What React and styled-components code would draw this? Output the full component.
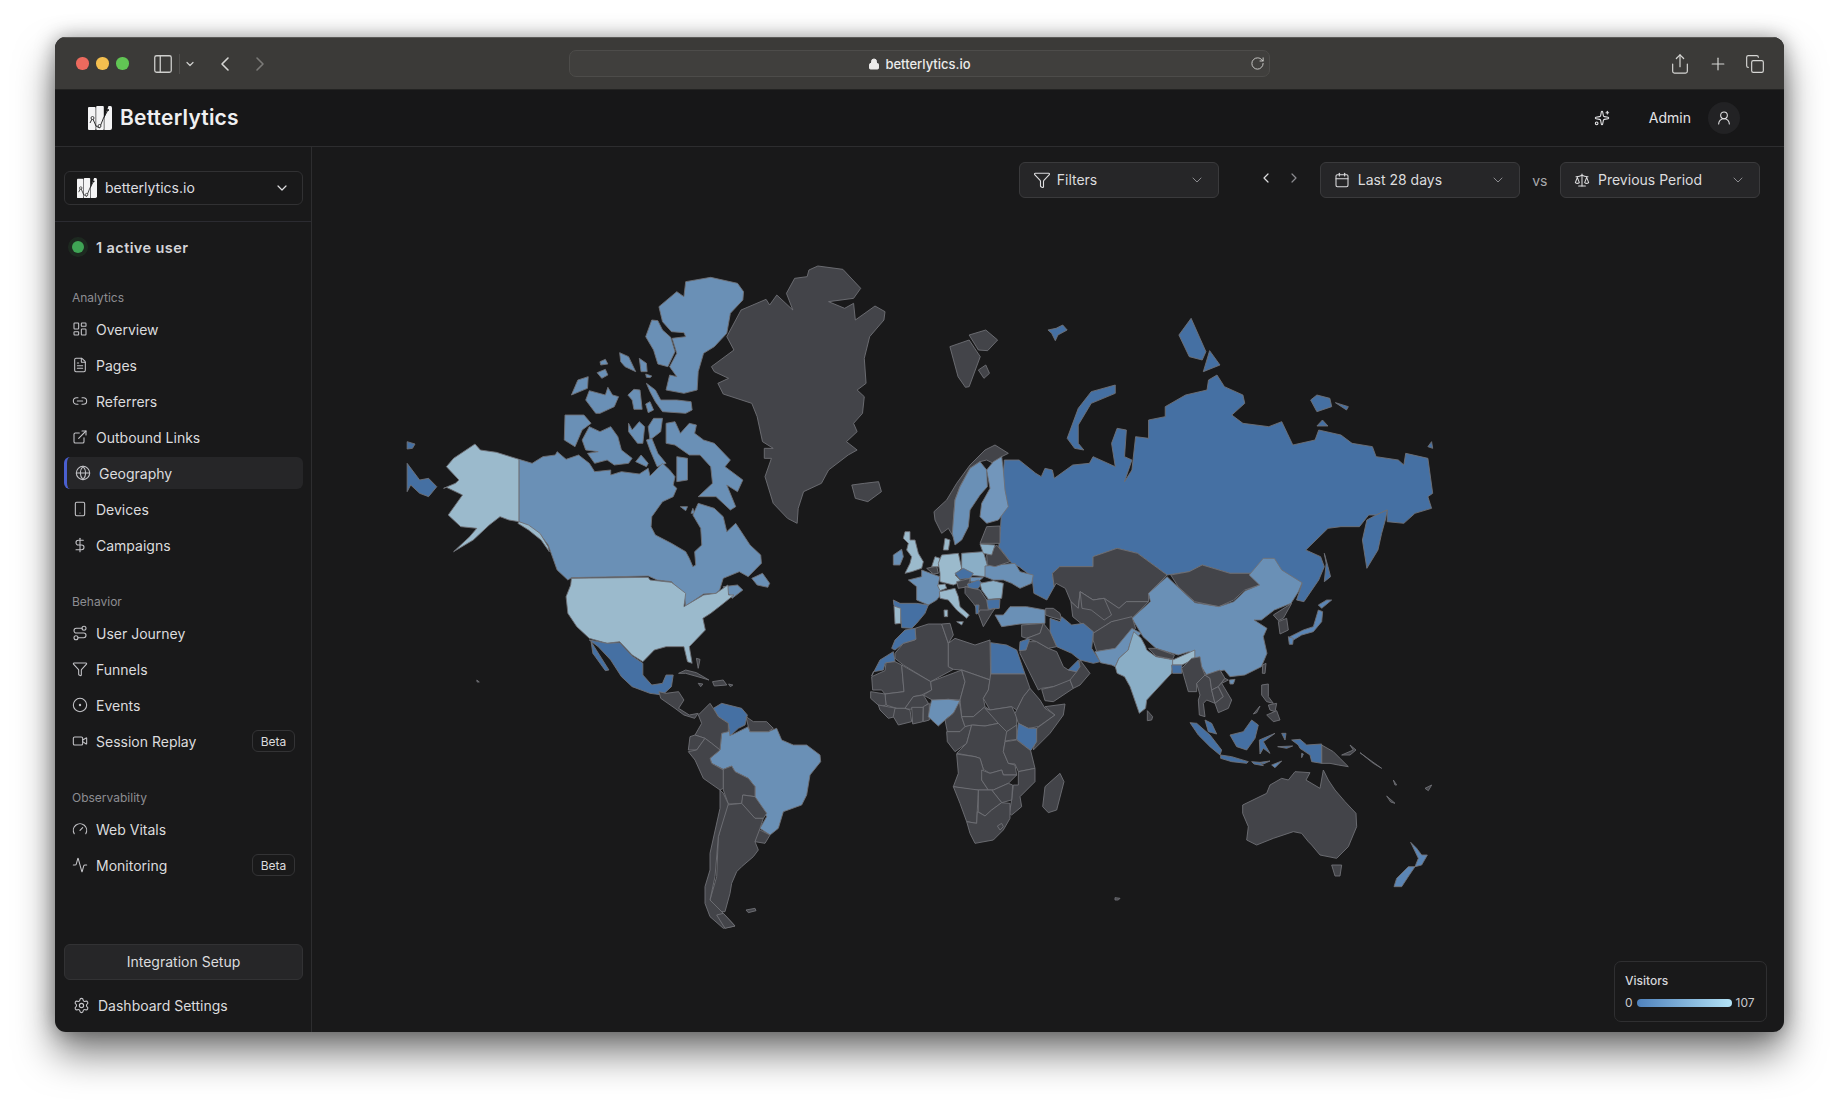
import React from "react";
import styled, { createGlobalStyle } from "styled-components";
import {
  Activity, Calendar, ChevronDown, ChevronLeft, ChevronRight, CircleDot, Copy, DollarSign,
  ExternalLink, FileText, Filter, Gauge, Globe, LayoutDashboard, Link2, Lock, PanelLeft, Plus,
  RotateCw, Route, Scale, Settings, Share, Smartphone, Sparkles, UserRound, Video,
} from "lucide-react";

const D = "#4570a3";
const M = "#6a90b6";
const N = "#5b86b6";
const L = "#9bbacc";
const I = "#8aaec6";
const G = "#434449";

// each region is traced in its own coordinates, x/y is where it starts on the map
const regions = [
  {
    x: 860, y: 300, sx: 2.703, sy: 3,
    shapes: [
      [D, "390,480 430,480 475,520 490,530 500,505 520,510 525,535 575,495 620,490 630,470 680,495 690,500 680,430 695,385 720,390 715,470 735,480 715,545 735,510 745,410 780,415 780,360 825,350 825,320 880,285 938,270 942,240 965,225 985,260 1035,285 1040,310 1005,345 1035,370 1105,380 1140,365 1155,400 1170,435 1230,420 1240,390 1300,405 1330,430 1385,440 1395,470 1455,480 1470,495 1475,460 1535,475 1548,580 1535,590 1545,625 1500,640 1470,670 1425,665 1425,630 1395,645 1375,645 1350,680 1300,680 1265,685 1205,750 1245,770 1255,800 1240,840 1200,905 1180,900 1195,850 1120,805 1100,775 1060,820 1000,820 925,795 890,815 830,825 750,760 695,745 630,770 630,800 540,800 520,820 525,860 505,900 470,880 465,830 430,800 410,790 375,740 380,680"],
      [D, "1358,720 1370,660 1395,645 1425,630 1420,660 1410,700 1400,750 1370,805"],
      [D, "1255,760 1265,800 1272,830 1255,845 1260,790"],
      [D, "560,415 590,325 625,275 690,255 690,280 625,310 590,375 590,430 605,450 580,445"],
      [D, "862,105 895,55 935,155 925,180 890,170"],
      [D, "928,215 945,152 973,195"],
      [D, "1218,300 1235,285 1270,295 1275,320 1235,335"],
      [D, "1285,308 1320,320 1315,330"],
      [D, "1235,378 1250,360 1265,378"],
      [D, "508,90 530,85 548,75 560,90 535,105 528,122 518,100"],
      [D, "1535,440 1545,425 1548,445"],
      [G, "243,140 295,120 325,170 295,260 285,262 265,230"],
      [G, "295,105 340,90 372,120 345,152 320,150"],
      [G, "320,210 340,195 350,220 335,235"],
      [G, "630,770 695,745 750,760 830,825 780,880 780,905 720,905 700,925 660,895 630,900 595,875 590,925 570,905 555,865 530,850 525,860 520,820 540,800 630,800"],
      [G, "840,825 890,815 925,795 1000,820 1060,820 1080,855 1040,870 1010,900 970,920 905,905 860,860"],
      [M, "830,830 860,862 905,908 970,920 1010,905 1042,872 1080,855 1052,825 1090,775 1120,775 1140,810 1195,848 1185,875 1165,910 1120,930 1085,960 1065,960 1100,985 1090,1010 1100,1060 1085,1100 1040,1125 1000,1130 985,1110 960,1115 940,1130 920,1095 890,1055 860,1065 800,1045 765,1010 735,955 785,905 780,880"],
      [G, "575,950 570,905 590,925 595,875 630,900 660,895 700,925 720,905 780,905 735,955 680,965 630,1000"],
      [G, "595,875 630,900 660,895 680,945 660,960 625,930 600,925"],
      [G, "630,1000 680,965 735,950 745,985 695,1045 640,1055 630,1020"],
      [M, "635,1055 690,1045 735,985 760,1000 730,1030 725,1050 700,1075 690,1100 680,1095 650,1088"],
      [I, "740,995 760,1015 772,1040 775,1050 800,1070 850,1080 845,1095 842,1120 800,1170 775,1200 772,1225 755,1240 730,1160 715,1130 695,1120 690,1100 700,1075 725,1050 730,1030"],
      [G, "780,1045 800,1045 850,1065 845,1078 800,1068"],
      [L, "845,1080 905,1050 905,1075 880,1090 870,1095 845,1095"],
      [D, "842,1095 870,1095 870,1120 845,1120"],
    ],
  },
  {
    x: 860, y: 610, sx: 3, sy: 3,
    shapes: [
      [G, "105,130 130,100 165,90 165,55 205,42 245,42 265,100 265,170 280,178 212,215 130,165 105,145"],
      [G, "245,42 270,40 280,75 265,100"],
      [G, "265,100 285,85 345,105 390,90 392,210 305,180 280,178 265,170"],
      [D, "392,98 440,105 470,120 495,192 393,192"],
      [D, "135,60 165,55 168,88 130,100 105,120 95,115 105,90"],
      [D, "35,198 60,150 100,125 105,155 75,160 70,180 40,185"],
      [G, "35,200 75,182 78,158 105,155 125,165 132,245 75,252 65,240 38,240"],
      [G, "125,165 212,215 215,240 185,255 160,260 135,295 110,295 78,285 75,252 132,245"],
      [G, "212,215 305,180 315,215 300,270 265,268 220,272 190,255 215,240"],
      [G, "305,180 390,210 385,240 370,265 375,290 340,320 305,320 300,270 315,215"],
      [G, "392,192 495,192 510,235 490,260 470,300 455,290 390,300 370,265 385,240"],
      [G, "32,245 75,252 78,285 60,290 32,265"],
      [G, "55,285 110,295 105,320 85,325 60,300"],
      [G, "105,295 135,295 150,300 155,335 115,345 100,320"],
      [G, "135,295 160,260 190,255 205,280 190,292 150,298"],
      [G, "155,292 190,292 188,335 158,342"],
      [G, "190,290 208,280 208,330 190,335"],
      [M, "215,270 265,268 300,272 295,290 280,310 255,330 235,348 215,330 205,320 210,290"],
      [G, "255,330 280,310 298,275 305,320 315,350 300,365 262,365"],
      [G, "305,320 340,320 375,290 390,300 415,340 375,348 340,345 315,350"],
      [G, "260,365 300,365 315,350 335,345 320,400 285,425 262,395"],
      [G, "335,345 375,348 415,340 450,350 435,395 430,425 445,460 465,465 470,495 430,495 425,480 390,490 370,478 360,445 345,440 290,430 320,400"],
      [G, "375,295 390,300 455,290 470,320 470,350 440,365 415,340"],
      [G, "490,260 510,235 540,270 555,295 585,315 535,350 505,355 475,340 465,310"],
      [G, "555,290 615,282 610,315 570,370 520,420 530,355 585,315"],
      [D, "475,340 505,355 530,355 530,395 512,422 470,388"],
      [G, "440,365 470,345 470,388 435,393"],
      [G, "435,395 470,390 512,422 525,475 475,485 465,462 445,460 430,425"],
      [G, "290,432 345,440 360,445 370,478 365,510 385,540 340,540 280,530 295,490"],
      [G, "365,480 390,490 425,480 430,495 470,495 445,520 400,540 385,540 365,510"],
      [G, "475,485 525,475 525,515 480,560 485,590 455,615 448,610 455,570 460,525 475,525"],
      [G, "400,540 445,520 458,525 455,570 425,578 395,540"],
      [G, "355,540 395,540 425,578 395,600 375,618 355,605"],
      [G, "280,530 355,540 350,640 320,635 300,580"],
      [G, "320,635 350,640 352,605 375,618 395,600 425,578 450,580 450,625 430,660 400,690 345,700 330,670"],
      [G, "412,648 425,640 430,650 420,660"],
      [G, "555,530 600,490 612,515 590,600 565,608 548,590"],
      [G, "495,95 530,95 565,115 590,125 610,170 625,180 650,185 645,215 580,230 545,235 535,240 480,130 480,125"],
      [G, "545,238 580,230 630,210 640,235 580,275 555,272"],
      [G, "640,235 630,210 650,185 660,150 690,190 660,225"],
      [D, "625,180 655,150 660,170 650,185"],
      [D, "480,95 510,85 498,120 478,122"],
    ],
  },
  {
    x: 880, y: 440, sx: 3, sy: 3,
    shapes: [
      [G, "162,215 200,180 230,130 270,75 315,30 345,15 385,40 365,50 340,70 320,60 300,65 270,85 240,140 225,180 220,240 220,290 205,265 185,280 165,240"],
      [M, "300,65 320,90 322,140 300,165 270,210 265,260 245,300 225,315 217,280 225,180 240,140 270,85"],
      ["#7296bb", "340,65 365,50 370,90 375,150 385,200 355,240 320,250 300,230 305,190 330,145 320,90"],
      [L, "195,295 210,300 205,330 190,330"],
      [L, "75,275 90,275 90,300 105,300 115,340 130,365 125,385 95,395 75,400 90,370 95,350 80,330 85,310 70,295"],
      [M, "40,345 65,328 70,350 60,375 40,375"],
      [M, "85,420 125,410 125,390 165,405 180,410 175,430 185,460 170,480 145,495 110,480 110,440"],
      [G, "140,385 170,378 175,400 160,402"],
      [L, "155,380 165,350 180,355 175,380"],
      [L, "175,370 185,345 235,340 245,385 225,405 245,425 220,435 180,425 180,400"],
      [I, "245,340 310,335 322,375 315,410 270,405 245,385"],
      [D, "225,400 250,385 280,400 270,415 240,418"],
      [L, "172,435 195,432 200,445 180,452"],
      [G, "230,425 270,415 265,440 235,445"],
      [M, "270,412 310,412 295,425 272,425"],
      [D, "262,432 295,420 305,428 295,445 268,450"],
      [L, "178,455 225,445 235,470 240,500 268,525 260,535 230,510 205,480 180,475"],
      [L, "192,510 203,510 203,530 193,530"],
      [L, "230,545 250,545 245,555"],
      [M, "315,378 405,370 420,395 460,405 455,430 420,445 395,430 370,420 340,420 315,410"],
      [G, "350,315 390,365 345,380 322,375 320,345"],
      [I, "300,312 345,315 335,345 310,340"],
      [G, "320,260 360,258 360,310 300,310"],
      [I, "300,430 340,422 370,430 365,475 325,478 305,450"],
      [D, "315,480 360,478 358,505 325,508"],
      [G, "255,440 300,450 320,480 325,510 310,530 300,520 280,490 255,460"],
      [D, "287,495 297,495 295,520 288,522"],
      [G, "300,510 325,510 345,505 335,520 310,560 295,520"],
      [D, "40,480 60,490 110,490 145,495 135,520 110,550 95,565 65,563 60,510 42,497"],
      [L, "42,498 62,505 62,550 45,552"],
      [M, "345,525 370,525 390,500 440,500 495,510 495,550 420,552 365,560"],
      [G, "497,505 520,505 540,520 545,540 510,530 497,525"],
      [D, "510,535 540,545 545,530 575,555 610,550 640,575 635,625 660,665 640,670 600,660 575,640 530,620 510,575"],
      [G, "425,555 490,550 480,580 440,595 425,590"],
      [G, "490,550 510,575 530,620 505,625 470,605 440,595 480,580"],
    ],
  },
  {
    x: 660, y: 680, sx: 3, sy: 3,
    shapes: [
      [M, "185,160 205,150 215,165 265,140 270,155 325,155 350,145 365,180 400,195 440,195 480,225 482,245 450,285 440,345 425,375 370,395 355,445 330,465 300,445 320,410 285,350 285,320 265,295 225,275 215,258 190,268 155,250 150,235 180,210"],
      [D, "160,85 185,70 245,85 262,105 255,135 235,145 210,168 205,130 175,110"],
      [G, "115,105 150,70 160,85 175,110 205,130 205,155 185,160 180,210 155,190 135,175 105,165 125,130"],
      [G, "258,110 280,125 320,125 340,145 325,155 270,155 265,140"],
      [G, "90,170 105,165 135,175 110,210 85,210"],
      [G, "85,215 110,210 135,175 155,190 180,210 150,235 155,250 190,270 190,325 180,330 130,295 105,240"],
      [G, "190,268 215,258 225,275 265,295 285,320 285,350 250,345 245,370 205,372 190,330"],
      [G, "248,345 285,350 320,400 310,415 285,415 245,372"],
      [G, "290,445 330,465 315,490 285,485"],
      [G, "200,375 245,370 285,415 310,415 300,445 285,485 295,510 280,530 245,560 230,575 215,610 210,640 195,695 160,695 150,660 170,590 175,470"],
      [G, "180,330 190,340 205,372 175,470 165,590 150,660 190,700 225,738 190,745 150,710 135,670 135,620 150,570 150,520 180,385"],
      [G, "170,705 190,700 225,738 195,745"],
      [G, "258,690 285,685 288,692 265,698"],
    ],
  },
  {
    x: 1100, y: 600, sx: 3, sy: 3,
    shapes: [
      [G, "428,615 500,580 510,555 545,535 565,540 585,515 630,518 618,540 660,565 670,510 685,540 705,570 735,605 768,640 770,680 745,740 710,775 660,765 635,735 625,725 605,700 580,695 520,715 470,735 440,720 445,680 428,640"],
      [G, "695,795 725,795 720,828 705,828"],
      [N, "932,727 950,745 965,765 982,765 965,795 945,800 955,775"],
      [N, "945,800 928,825 905,860 882,860 890,835 925,800"],
      [G, "665,435 700,455 720,475 745,500 715,495 690,490 665,490"],
      [D, "575,420 600,418 620,435 665,432 665,490 635,485 630,465 600,445 595,435"],
      [D, "390,405 430,395 455,360 475,375 465,415 440,450 410,440"],
      [D, "270,368 290,370 330,405 365,450 360,465 330,440 295,405"],
      [D, "315,360 335,370 350,402 325,395"],
      [D, "362,465 395,470 445,485 440,490 395,485 362,475"],
      [D, "455,485 480,487 490,497 462,492"],
      [D, "480,487 510,483 490,492"],
      [N, "515,495 545,483 525,503"],
      [D, "478,420 525,400 490,425 510,460 490,445 480,462"],
      [D, "545,400 558,400 555,420"],
      [D, "533,440 578,438 560,445"],
      [D, "605,460 610,462 605,473"],
      [G, "485,255 505,252 505,290 520,310 500,305 485,285"],
      [G, "505,315 530,310 525,335 510,330"],
      [G, "500,345 530,332 540,360 520,365"],
      [G, "460,342 480,318 470,338"],
      [G, "488,195 498,190 495,220 487,220"],
      [G, "142,332 158,350 155,360 142,362"],
      [M, "388,240 405,238 400,252 390,252"],
      [N, "570,110 610,90 640,80 655,30 668,35 665,65 640,95 605,105 580,120"],
      [N, "565,110 580,115 578,133 568,133"],
      [N, "655,15 680,0 695,0 665,25"],
      [G, "535,65 560,55 565,90 540,102"],
      [G, "520,45 575,10 550,55 535,62"],
      [G, "245,205 275,175 300,170 305,200 315,225 290,250 290,275 265,275 255,240"],
      [G, "290,250 315,225 330,235 335,270 345,310 320,300 310,310 315,350 298,345 295,300 300,285"],
      [G, "315,225 360,210 375,235 355,260 335,270 330,235"],
      [G, "335,270 355,260 370,290 345,310"],
      [G, "375,235 385,240 365,250 395,300 385,325 355,338 345,310 370,290 355,260"],
      [G, "750,435 768,450 750,465 725,465 760,450"],
      [G, "780,458 810,480 845,505 820,490"],
      [G, "880,540 890,555 885,555"],
      [G, "860,588 885,610 872,606"],
      [G, "975,565 995,555 985,572"],
      [G, "45,893 60,895 55,900 45,900"],
    ],
  },
  {
    x: 400, y: 250, sx: 2.8, sy: 3,
    shapes: [
      [M, "725,170 775,125 795,140 800,95 870,82 945,100 962,125 960,150 925,190 915,250 880,290 850,310 835,365 832,420 795,430 745,420 755,375 775,380 755,350 775,310 762,265 800,260 795,248 760,245 735,215"],
      [M, "688,260 705,210 722,212 735,240 758,262 770,305 750,350 722,342 710,300"],
      [M, "615,308 640,320 660,365 630,350 618,335"],
      [M, "670,325 690,340 692,365 675,365"],
      [M, "560,335 575,328 582,342 562,345"],
      [M, "552,368 575,358 582,375 565,385"],
      [M, "688,372 705,378 700,383 690,382"],
      [M, "480,435 498,390 527,380 525,415"],
      [M, "520,450 530,422 575,435 582,412 595,435 612,440 600,470 560,490 548,490"],
      [M, "638,435 655,418 672,420 678,478 655,478 650,450"],
      [M, "690,400 715,420 730,450 775,450 815,455 818,480 800,490 735,485 715,455 700,425"],
      [M, "688,462 700,455 710,480 695,488"],
      [M, "462,495 515,495 535,520 510,540 490,590 460,570"],
      [M, "510,570 530,530 560,545 590,530 610,560 620,600 650,625 640,640 600,645 580,630 545,640 525,610 555,605 520,600"],
      [M, "640,520 650,540 670,515 685,530 680,580 665,580 640,545"],
      [M, "695,530 710,505 735,505 730,545 700,570"],
      [M, "690,570 705,565 722,610 745,640 720,650 700,600"],
      [M, "660,635 675,615 695,640 690,650"],
      [M, "745,520 770,515 785,550 810,520 830,525 825,550 850,570 880,580 925,630 910,650 960,690 945,725 915,705 940,770 925,780 885,740 835,740 875,700 870,650 840,615 810,615 770,585 745,580"],
      [M, "775,620 805,625 805,690 775,695"],
      [M, "785,770 805,770 800,782"],
      [M, "820,775 825,790 815,790"],
      [M, "333,628 370,640 400,620 435,615 440,605 465,628 500,615 530,640 545,665 590,660 590,675 620,665 670,672 695,655 700,678 735,640 755,660 770,680 765,705 775,715 765,740 735,755 705,800 703,830 715,855 760,880 800,905 810,925 820,950 828,945 825,905 845,885 842,835 820,795 835,760 880,775 905,800 915,845 940,820 980,885 1010,915 1012,940 975,980 950,965 905,985 895,1020 885,1030 850,1032 800,1068 795,1030 760,995 720,990 695,978 480,983 470,990 440,960 430,930 415,885 390,850 360,830 333,815"],
      [M, "985,985 1015,970 1035,1000 1030,1012 1000,1005"],
      [M, "905,1010 945,1005 960,1020 930,1045"],
      [L, "480,985 695,982 700,990 760,997 800,1030 795,1070 850,1035 885,1030 918,1005 920,1035 935,1035 900,1065 870,1090 848,1105 855,1140 810,1190 818,1240 805,1235 795,1190 745,1190 712,1200 680,1235 650,1215 615,1175 580,1180 530,1165 495,1130 470,1090 465,1040 478,1005"],
      [L, "333,628 333,815 305,810 280,800 250,825 205,870 150,905 195,860 215,835 170,830 135,795 175,735 130,712 122,715 155,700 165,690 130,650 150,625 210,582 225,600 270,607"],
      [L, "333,815 360,825 392,850 415,890 418,905 395,870 360,840 330,820"],
      [D, "20,640 55,690 80,685 103,710 80,740 55,730 30,705 20,725"],
      [D, "20,575 42,582 35,595 20,597"],
      [G, "1145,60 1170,48 1240,58 1290,115 1270,145 1200,155 1245,175 1270,160 1275,210 1330,168 1358,185 1355,210 1315,260 1300,325 1305,400 1280,420 1300,440 1295,490 1270,520 1280,545 1250,575 1280,600 1255,615 1200,660 1180,700 1130,725 1115,775 1112,820 1085,805 1045,760 1022,680 1040,625 1020,625 1020,595 1045,595 1015,575 1000,500 985,460 905,432 890,400 920,385 880,365 872,350 935,300 915,260 955,180 1025,148 1035,165 1055,135 1100,180 1082,130 1105,85 1140,80"],
      [G, "1265,705 1300,700 1340,695 1348,725 1310,755 1275,745"],
      [D, "530,1170 580,1180 615,1178 650,1218 680,1240 680,1275 705,1305 735,1300 745,1275 765,1275 760,1310 735,1335 700,1330 650,1310 620,1280 590,1230 555,1190"],
      [D, "535,1175 585,1260 575,1262 540,1210"],
      [G, "780,1270 800,1260 830,1268 865,1290 840,1282 800,1270"],
      [G, "875,1295 905,1290 915,1305 880,1308"],
      [G, "835,1300 848,1302 842,1310"],
      [G, "920,1302 932,1305 925,1310"],
      [G, "830,1225 840,1228 835,1255"],
      [G, "725,1325 745,1330 780,1325 795,1350 780,1375 810,1395 835,1390 825,1405 795,1395 770,1375 730,1345"],
      [G, "215,1290 222,1296 216,1296"],
    ],
  },
];

const navGroups = [
  {
    label: "Analytics",
    items: [
      { name: "Overview", icon: LayoutDashboard },
      { name: "Pages", icon: FileText },
      { name: "Referrers", icon: Link2 },
      { name: "Outbound Links", icon: ExternalLink },
      { name: "Geography", icon: Globe, active: true },
      { name: "Devices", icon: Smartphone },
      { name: "Campaigns", icon: DollarSign },
    ],
  },
  {
    label: "Behavior",
    items: [
      { name: "User Journey", icon: Route },
      { name: "Funnels", icon: Filter },
      { name: "Events", icon: CircleDot },
      { name: "Session Replay", icon: Video, beta: true },
    ],
  },
  {
    label: "Observability",
    items: [
      { name: "Web Vitals", icon: Gauge },
      { name: "Monitoring", icon: Activity, beta: true },
    ],
  },
];

const GlobalStyle = createGlobalStyle`
  html, body {
    margin: 0;
    background: #fff;
  }
  body {
    font-family: Inter, "Liberation Sans", sans-serif;
    -webkit-font-smoothing: antialiased;
  }
`;

const Page = styled.div`
  width: 1840px;
  height: 1106px;
  padding: 37px 0 0 55px;
  box-sizing: border-box;
  overflow: hidden;
`;

const Window = styled.div`
  width: 1729px;
  height: 995px;
  display: flex;
  flex-direction: column;
  border-radius: 11px;
  overflow: hidden;
  background: #19191a;
  box-shadow: 0 22px 38px rgba(0, 0, 0, 0.5), 0 0 20px rgba(0, 0, 0, 0.35);
`;

const TitleBar = styled.div`
  height: 53px;
  flex: none;
  display: grid;
  grid-template-columns: 514px 701px 1fr;
  align-items: center;
  background: #3b3a38;
  border-top: 1px solid #5a5957;
  border-bottom: 1px solid #232322;
  box-sizing: border-box;
  color: #d6d6d4;
`;

const TitleLeft = styled.div`
  display: flex;
  align-items: center;
  padding-left: 21px;
`;

const Light = styled.span`
  width: 12.5px;
  height: 12.5px;
  border-radius: 50%;
  margin-right: 7.5px;
  background: ${(p) => p.$color};
`;

const SidebarToggle = styled.div`
  display: flex;
  align-items: center;
  margin-left: 16px;
  padding-right: 4px;
  color: #cfcfcd;
`;

const ToggleDivider = styled.span`
  width: 1px;
  height: 20px;
  margin: 0 4px 0 5px;
  background: #4f4e4c;
`;

const NavArrow = styled.span`
  display: flex;
  margin-left: ${(p) => p.$gap}px;
  color: ${(p) => (p.$dim ? "#7b7a78" : "#d6d6d4")};
`;

const UrlBar = styled.div`
  height: 27px;
  display: grid;
  grid-template-columns: 1fr auto 1fr;
  align-items: center;
  border: 1px solid #4d4c4a;
  border-radius: 7px;
  background: #403f3d;
  padding: 0 3px;
  box-sizing: border-box;
`;

const UrlText = styled.div`
  grid-column: 2;
  display: flex;
  align-items: center;
  gap: 5px;
  font-size: 13px;
  font-weight: 500;
  color: #ecebea;
  svg {
    fill: currentColor;
  }
`;

const Reload = styled.span`
  justify-self: end;
  display: flex;
  margin-right: 1px;
  color: #cfcfcd;
`;

const TitleRight = styled.div`
  display: flex;
  align-items: center;
  justify-content: flex-end;
  gap: 17px;
  padding-right: 19px;
`;

const Header = styled.header`
  height: 57px;
  flex: none;
  display: flex;
  align-items: center;
  justify-content: space-between;
  padding: 0 44px 1px 33px;
  background: #171718;
  border-bottom: 1px solid #2d2d2f;
  box-sizing: border-box;
`;

const Brand = styled.div`
  display: flex;
  align-items: center;
  gap: 8px;
  font-size: 21px;
  font-weight: 600;
  letter-spacing: 0.2px;
  color: #f0f0f1;
`;

const HeaderRight = styled.div`
  display: flex;
  align-items: center;
  color: #e4e4e6;
  font-size: 14px;
`;

const AdminName = styled.span`
  margin: 0 17px 0 39px;
`;

const Avatar = styled.span`
  width: 32px;
  height: 32px;
  border-radius: 50%;
  background: #222224;
  display: flex;
  align-items: center;
  justify-content: center;
`;

const Body = styled.div`
  flex: 1;
  min-height: 0;
  display: grid;
  grid-template-columns: 257px 1fr;
`;

const Sidebar = styled.aside`
  display: flex;
  flex-direction: column;
  border-right: 1px solid #2d2d2f;
  box-sizing: border-box;
`;

const SiteBlock = styled.div`
  padding: 24px 8px 16px 9px;
  border-bottom: 1px solid #2b2b31;
`;

const SiteSelect = styled.div`
  height: 34px;
  display: flex;
  align-items: center;
  gap: 8px;
  padding: 0 12px 1px;
  border: 1px solid #313133;
  border-radius: 6px;
  box-sizing: border-box;
  font-size: 14px;
  color: #dedee0;
  svg:last-child {
    margin-left: auto;
  }
`;

const ActiveUsers = styled.div`
  display: flex;
  align-items: center;
  gap: 12px;
  height: 20px;
  margin: 15px 0 33px;
  padding-left: 17px;
  font-size: 14.5px;
  font-weight: 600;
  letter-spacing: 0.4px;
  color: #d4d4d8;
`;

const Dot = styled.span`
  width: 12px;
  height: 12px;
  border-radius: 50%;
  background: #3fa455;
  box-shadow: 0 0 0 4px rgba(63, 164, 85, 0.12);
`;

const NavSection = styled.nav`
  padding: 0 8px 0 9px;
  margin-bottom: 33px;
`;

const SectionLabel = styled.div`
  height: 16px;
  line-height: 16px;
  margin: 0 0 7px 8px;
  font-size: 12px;
  color: #8d8d92;
`;

const NavList = styled.div`
  display: flex;
  flex-direction: column;
  gap: 4px;
`;

const NavRow = styled.div`
  height: 32px;
  display: flex;
  align-items: center;
  gap: 8px;
  padding: 0 8px;
  box-sizing: border-box;
  border-radius: 6px;
  font-size: 14px;
  color: #dcdcde;
  background: ${(p) => (p.$active ? "#262628" : "transparent")};
  border-left: ${(p) => (p.$active ? "3px solid #4a5fd0" : "none")};
  svg {
    color: #c4c4c8;
    flex: none;
  }
`;

const Beta = styled.span`
  margin-left: auto;
  height: 22px;
  width: 43px;
  display: flex;
  align-items: center;
  justify-content: center;
  border: 1px solid #333335;
  border-radius: 6px;
  box-sizing: border-box;
  font-size: 12px;
  color: #dcdcde;
`;

const SidebarFooter = styled.div`
  margin-top: auto;
  padding: 0 8px 11px 9px;
`;

const SetupButton = styled.div`
  height: 36px;
  display: flex;
  align-items: center;
  justify-content: center;
  padding-bottom: 1px;
  background: #262628;
  border: 1px solid #323234;
  border-radius: 6px;
  box-sizing: border-box;
  font-size: 14px;
  color: #dcdcde;
`;

const SettingsRow = styled(NavRow)`
  margin-top: 9px;
  padding-left: 9px;
  svg {
    width: 17px;
    height: 17px;
  }
`;

const Main = styled.main`
  position: relative;
  display: flex;
  flex-direction: column;
  padding-top: 15px;
  min-width: 0;
`;

const Toolbar = styled.div`
  display: flex;
  align-items: center;
  justify-content: flex-end;
  height: 36px;
  flex: none;
  padding-right: 24px;
  font-size: 14px;
  color: #dcdcde;
`;

const SelectButton = styled.div`
  width: 200px;
  height: 36px;
  display: flex;
  align-items: center;
  gap: ${(p) => (p.$tight ? 6 : 8)}px;
  padding: 0 13px 1px;
  background: #262628;
  border: 1px solid #3a3a3c;
  border-radius: 6px;
  box-sizing: border-box;
  svg:last-child {
    margin-left: auto;
    color: #8b8b8f;
  }
`;

const DateNav = styled.div`
  display: flex;
  gap: 12px;
  margin: -4px 18px 0 39px;
  svg:last-child {
    color: #8b8b8f;
  }
`;

const Versus = styled.span`
  margin: 0 12.5px;
  color: #a8a8ac;
`;

const MapSvg = styled.svg`
  display: block;
  flex: none;
  margin: 52px 0 0 88px;
  polygon {
    stroke: #6f7076;
    stroke-width: 0.9;
    stroke-linejoin: round;
    vector-effect: non-scaling-stroke;
  }
`;

const Legend = styled.div`
  position: absolute;
  right: 17px;
  bottom: 10px;
  width: 153px;
  height: 61px;
  padding: 11px 10px 0;
  border: 1px solid #2f2f31;
  border-radius: 7px;
  box-sizing: border-box;
  color: #c8c8cc;
  font-size: 12px;
`;

const LegendTitle = styled.div`
  font-weight: 500;
  line-height: 16px;
  color: #d6d6da;
`;

const LegendScale = styled.div`
  display: flex;
  align-items: center;
  gap: 4px;
  margin-top: 6px;
  line-height: 16px;
`;

const LegendBar = styled.span`
  width: 95px;
  height: 8px;
  border-radius: 4px;
  background: linear-gradient(90deg, #4f82bd, #b3e3f7);
`;

const Logo = ({ size }) => (
  <svg width={size} height={size} viewBox="0 0 24 24">
    <rect x="0" y="1" width="7.6" height="23" rx="1" fill="#f4f4f5" />
    <rect x="8.2" y="0" width="7.6" height="24" rx="1" fill="#f4f4f5" />
    <path d="M16.4 12 20.5 0h2q1.5 0 1.5 2v20q0 2-2 2h-5.6z" fill="#f4f4f5" />
    <path d="M2 17 4.5 12l3.5 8 3.5 2 4-10L20 4" fill="none" stroke="#19191a" strokeWidth="0.9" />
    <circle cx="4.5" cy="12" r="1.5" fill="#f4f4f5" stroke="#19191a" strokeWidth="0.8" />
    <circle cx="11.5" cy="20" r="1.5" fill="#f4f4f5" stroke="#19191a" strokeWidth="0.8" />
    <circle cx="20" cy="4" r="1.1" fill="#19191a" />
  </svg>
);

const NavItem = ({ item }) => {
  const Icon = item.icon;
  return (
    <NavRow $active={item.active}>
      <Icon size={16} strokeWidth={1.6} />
      {item.name}
      {item.beta && <Beta>Beta</Beta>}
    </NavRow>
  );
};

const App = () => {
  return (
    <Page>
      <GlobalStyle />
      <Window>
        <TitleBar>
          <TitleLeft>
            <Light $color="#ec6a5e" />
            <Light $color="#f4bf4f" />
            <Light $color="#61c554" />
            <SidebarToggle>
              <PanelLeft size={22} strokeWidth={1.4} />
              <ToggleDivider />
              <ChevronDown size={12} strokeWidth={2.4} />
            </SidebarToggle>
            <NavArrow $gap={13}><ChevronLeft size={24} strokeWidth={1.6} /></NavArrow>
            <NavArrow $gap={11} $dim><ChevronRight size={24} strokeWidth={1.6} /></NavArrow>
          </TitleLeft>
          <UrlBar>
            <UrlText>
              <Lock size={12} strokeWidth={2} />
              betterlytics.io
            </UrlText>
            <Reload><RotateCw size={15} strokeWidth={1.5} /></Reload>
          </UrlBar>
          <TitleRight>
            <Share size={22} strokeWidth={1.3} />
            <Plus size={20} strokeWidth={1.4} />
            <Copy size={20} strokeWidth={1.4} />
          </TitleRight>
        </TitleBar>

        <Header>
          <Brand>
            <Logo size={24} />
            Betterlytics
          </Brand>
          <HeaderRight>
            <Sparkles size={16} strokeWidth={1.6} />
            <AdminName>Admin</AdminName>
            <Avatar><UserRound size={16} strokeWidth={1.6} /></Avatar>
          </HeaderRight>
        </Header>

        <Body>
          <Sidebar>
            <SiteBlock>
              <SiteSelect>
                <Logo size={20} />
                betterlytics.io
                <ChevronDown size={16} strokeWidth={1.8} />
              </SiteSelect>
            </SiteBlock>
            <ActiveUsers>
              <Dot />
              1 active user
            </ActiveUsers>
            {navGroups.map((group) => (
              <NavSection key={group.label}>
                <SectionLabel>{group.label}</SectionLabel>
                <NavList>
                  {group.items.map((item) => (
                    <NavItem key={item.name} item={item} />
                  ))}
                </NavList>
              </NavSection>
            ))}
            <SidebarFooter>
              <SetupButton>Integration Setup</SetupButton>
              <SettingsRow>
                <Settings size={16} strokeWidth={1.6} />
                Dashboard Settings
              </SettingsRow>
            </SidebarFooter>
          </Sidebar>

          <Main>
            <Toolbar>
              <SelectButton $tight>
                <Filter size={18} strokeWidth={1.5} />
                Filters
                <ChevronDown size={16} strokeWidth={1.5} />
              </SelectButton>
              <DateNav>
                <ChevronLeft size={16} strokeWidth={1.8} />
                <ChevronRight size={16} strokeWidth={1.8} />
              </DateNav>
              <SelectButton>
                <Calendar size={16} strokeWidth={1.6} />
                Last 28 days
                <ChevronDown size={16} strokeWidth={1.5} />
              </SelectButton>
              <Versus>vs</Versus>
              <SelectButton>
                <Scale size={16} strokeWidth={1.6} />
                Previous Period
                <ChevronDown size={16} strokeWidth={1.5} />
              </SelectButton>
            </Toolbar>

            <MapSvg width="1040" height="700" viewBox="400 250 1040 700">
              {regions.map((region) => (
                <g
                  key={`${region.x}-${region.y}`}
                  transform={`translate(${region.x} ${region.y}) scale(${1 / region.sx} ${1 / region.sy})`}
                >
                  {region.shapes.map(([fill, points]) => (
                    <polygon key={points} points={points} fill={fill} />
                  ))}
                </g>
              ))}
            </MapSvg>

            <Legend>
              <LegendTitle>Visitors</LegendTitle>
              <LegendScale>
                0
                <LegendBar />
                107
              </LegendScale>
            </Legend>
          </Main>
        </Body>
      </Window>
    </Page>
  );
};

export default App;
